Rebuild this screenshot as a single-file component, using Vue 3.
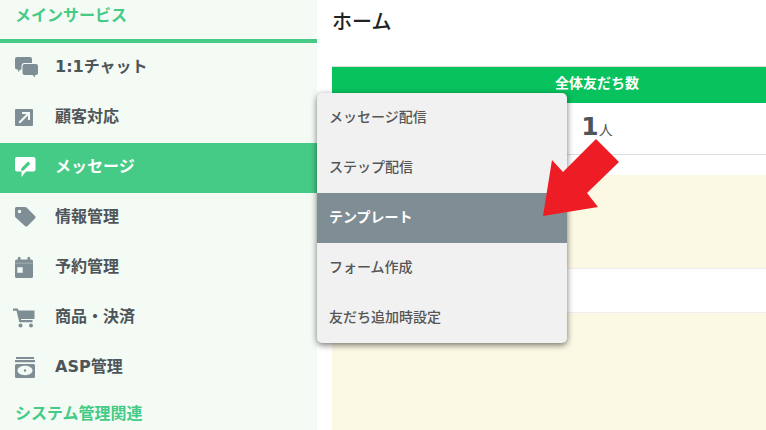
<template>
  <div class="page">
    <aside class="sidebar">
      <div class="section first">メインサービス</div>
      <div v-for="item in items" :key="item.label" class="nav-item" :class="{ active: item.active }">
        <svg class="nav-icon" viewBox="0 0 24 24" v-html="item.icon"></svg>
        <span class="nav-label">{{ item.label }}</span>
      </div>
      <div class="section">システム管理関連</div>
    </aside>

    <main class="content">
      <h1 class="title">ホーム</h1>
      <div class="stats">
        <div class="stats-head">全体友だち数</div>
        <div class="stats-value"><b>1</b><span>人</span></div>
      </div>
      <div class="panel panel-a"></div>
      <div class="gap-row"></div>
      <div class="panel panel-b"></div>
    </main>

    <div class="menu">
      <div v-for="sub in subItems" :key="sub" class="menu-item" :class="{ selected: sub === 'テンプレート' }">{{ sub }}</div>
    </div>

    <svg class="arrow" width="90" height="90" viewBox="0 0 90 90">
      <polygon points="57,4 80,27 48,58 59,72 4,81 13,25 24,37" fill="#ee1c25" />
    </svg>
  </div>
</template>

<script setup>
const items = [
  {
    label: '1:1チャット',
    icon: '<path d="M2 1h13a2 2 0 0 1 2 2v4H9.500A3 3 0 0 0 6.500 10v3.500H5.500L3 16v-2.500H2a2 2 0 0 1-2-2V3a2 2 0 0 1 2-2z"/><path d="M9.500 8H21a2 2 0 0 1 2 2v7a2 2 0 0 1-2 2h-1v2.500L17.500 19H9.500a2 2 0 0 1-2-2v-7a2 2 0 0 1 2-2z"/>'
  },
  {
    label: '顧客対応',
    icon: '<path fill-rule="evenodd" d="M1 3h16a1 1 0 0 1 1 1v15a1 1 0 0 1-1 1H1a1 1 0 0 1-1-1V4a1 1 0 0 1 1-1zM7 6v2h4.500L3.500 16 5 17.500l8-8V14h2V6z"/>'
  },
  {
    label: 'メッセージ',
    active: true,
    icon: '<path fill-rule="evenodd" d="M2 1h16.500a2 2 0 0 1 2 2v10.500a2 2 0 0 1-2 2H11L6.500 21v-5.500H2a2 2 0 0 1-2-2V3a2 2 0 0 1 2-2zM6 14.800l.4-2.600 6.700-6.700 2.200 2.200-6.700 6.700z"/>'
  },
  {
    label: '情報管理',
    icon: '<path fill-rule="evenodd" d="M1.500 1H10c.6 0 1.200.2 1.600.6l8.400 8.400c.7.7.7 1.800 0 2.500l-7.500 7.500c-.7.7-1.800.7-2.500 0L.6 11.500C.2 11.100 0 10.600 0 10V2.500C0 1.700.7 1 1.500 1zM4.500 3.800a1.700 1.700 0 1 0 0 3.400 1.700 1.700 0 0 0 0-3.400z"/>'
  },
  {
    label: '予約管理',
    icon: '<path fill-rule="evenodd" d="M3 1h2.500v2.500h7V1H15v2.500h1.500A1.500 1.500 0 0 1 18 5v15.500a1.500 1.500 0 0 1-1.500 1.500h-15A1.500 1.500 0 0 1 0 20.500V5a1.500 1.500 0 0 1 1.500-1.500H3zM2.300 11.300v5.400h5.400v-5.400z"/><rect x="0" y="6.800" width="18" height=".6" fill="#f4fbf5" opacity=".5"/>'
  },
  {
    label: '商品・決済',
    icon: '<path d="M-2 2.500h4.800l.9 2H19.500v8.500H5.800l.4 1H17.500v2.200H4.300L1.500 4.800H-2z"/><circle cx="5.500" cy="19.500" r="2"/><circle cx="16" cy="19.500" r="2"/>'
  },
  {
    label: 'ASP管理',
    icon: '<path d="M1 1h18v2H1zM0 4h20v2.200H0z"/><path fill-rule="evenodd" d="M1.500 8h17A1.500 1.500 0 0 1 20 9.500v11a1.500 1.500 0 0 1-1.500 1.500h-17A1.500 1.500 0 0 1 0 20.500v-11A1.500 1.500 0 0 1 1.500 8zM10 9.800c-4.100 0-7.500 2.100-7.500 4.700s3.400 4.700 7.500 4.700 7.500-2.100 7.500-4.700-3.400-4.700-7.500-4.700zM10 13.300a1.200 1.200 0 1 1 0 2.400 1.200 1.200 0 0 1 0-2.400z"/>'
  }
]

const subItems = ['メッセージ配信', 'ステップ配信', 'テンプレート', 'フォーム作成', '友だち追加時設定']
</script>

<style>
html, body {
  margin: 0;
  overflow: hidden;
  background: #fff;
}
</style>

<style scoped>
.page {
  position: relative;
  display: flex;
  width: 766px;
  height: 430px;
  overflow: hidden;
  font-family: "DejaVu Sans", "Noto Sans CJK JP", sans-serif;
  color: #4e5559;
}

.sidebar {
  flex: 0 0 317px;
  background: #f4fbf5;
}

.section {
  height: 37px;
  line-height: 42px;
  padding-left: 15px;
  font-size: 16px;
  font-weight: 700;
  color: #45cb85;
}

.section.first {
  height: 39px;
  line-height: 32px;
  border-bottom: 4px solid #45cb85;
}

.nav-item {
  display: flex;
  align-items: center;
  height: 50px;
  padding-left: 15px;
  font-size: 16px;
  font-weight: 700;
}

.nav-icon {
  flex: 0 0 24px;
  width: 24px;
  height: 24px;
  margin-right: 16px;
  fill: #7f8e95;
  overflow: visible;
}

.nav-label {
  margin-bottom: 6px;
}

.nav-item.active {
  background: #45cb85;
  color: #fff;
}

.nav-item.active .nav-icon {
  fill: #fff;
}

.content {
  flex: 1;
  min-width: 0;
  padding-left: 15px;
}

.title {
  margin: 0;
  height: 66px;
  line-height: 44px;
  font-size: 20px;
  font-weight: 500;
  color: #222;
}

.stats {
  width: 530px;
  text-align: center;
}

.stats-head {
  height: 36px;
  line-height: 33px;
  border-top: 1px solid #ddd;
  background: #08c25e;
  color: #fff;
  font-size: 14px;
  font-weight: 700;
}

.stats-value {
  height: 51px;
  line-height: 47px;
  border-bottom: 1px solid #ddd;
}

.stats-value b {
  font-size: 25px;
}

.stats-value span {
  font-size: 14px;
}

.panel {
  width: 530px;
  background: #fbf8e4;
}

.panel-a {
  margin-top: 20px;
  height: 93px;
}

.gap-row {
  width: 530px;
  height: 43px;
  border-top: 1px solid #eee;
  border-bottom: 1px solid #eee;
}

.panel-b {
  height: 117px;
}

.menu {
  position: absolute;
  left: 317px;
  top: 93px;
  width: 250px;
  background: #f1f1f1;
  border-radius: 5px;
  box-shadow: 0 2px 6px rgba(0, 0, 0, 0.55);
  overflow: hidden;
}

.menu-item {
  height: 50px;
  line-height: 48px;
  padding-left: 12px;
  font-size: 14px;
  font-weight: 500;
  color: #555;
}

.menu-item.selected {
  background: #7f8e95;
  color: #fff;
  font-weight: 700;
}

.arrow {
  position: absolute;
  left: 539px;
  top: 135px;
}
</style>
